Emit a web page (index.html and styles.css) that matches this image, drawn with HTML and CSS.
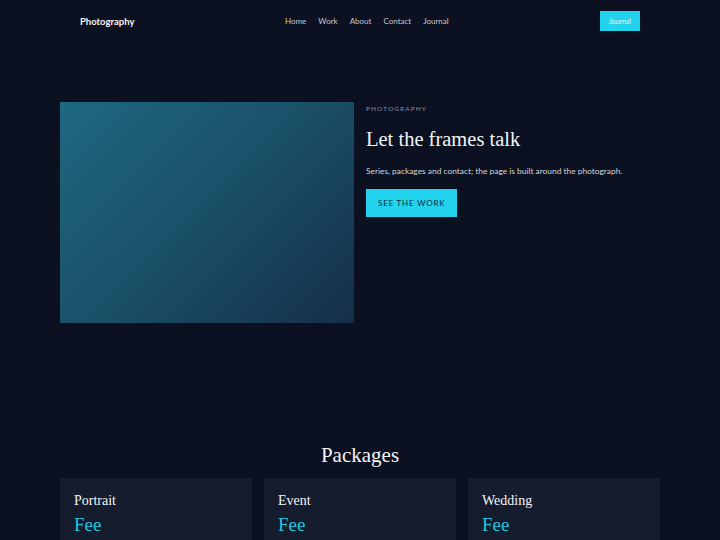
FILE: index.html
```html
<!DOCTYPE html>
<html>
<head>
    <title>Photography</title>
    <link rel="stylesheet" href="styles.css">
</head>
<body>
    <div class="container">
        <header class="site-header">
            <a class="logo" href="#">Photography</a>
            <nav class="nav">
                <a href="#">Home</a>
                <a href="#">Work</a>
                <a href="#">About</a>
                <a href="#">Contact</a>
                <a href="#">Journal</a>
            </nav>
            <a class="btn-small" href="#">Journal</a>
        </header>

        <section class="hero">
            <div class="hero-photo"></div>
            <div class="hero-text">
                <p class="eyebrow">PHOTOGRAPHY</p>
                <h1>Let the frames talk</h1>
                <p class="lead">Series, packages and contact; the page is built around the photograph.</p>
                <a class="btn" href="#">SEE THE WORK</a>
            </div>
        </section>

        <section class="packages">
            <h2>Packages</h2>
            <div class="cards">
                <div class="card">
                    <h3>Portrait</h3>
                    <p class="fee">Fee</p>
                </div>
                <div class="card">
                    <h3>Event</h3>
                    <p class="fee">Fee</p>
                </div>
                <div class="card">
                    <h3>Wedding</h3>
                    <p class="fee">Fee</p>
                </div>
            </div>
        </section>
    </div>
</body>
</html>
```

FILE: styles.css
```css
body {
    font-family: Lato, "Open Sans", sans-serif;
    background-color: #0b1120;
    color: #e5e7eb;
    margin: 0;
}
a {
    text-decoration: none;
    color: inherit;
}
.container {
    width: 600px;
    margin: 0 auto;
}
.site-header {
    display: flex;
    align-items: center;
    padding: 11px 20px;
}
.logo {
    font-weight: bold;
    font-size: 9.5px;
    color: #f3f4f6;
    width: 205px;
}
.nav {
    display: flex;
    gap: 12px;
    font-size: 8px;
    color: #c3c8d2;
}
.btn-small {
    background-color: #22d3ee;
    color: #e0f7fb;
    font-size: 7px;
    padding: 6px 9px;
    height: 8px;
    line-height: 8px;
    margin-left: auto;
}
.hero {
    display: grid;
    grid-template-columns: 1fr 1fr;
    gap: 12px;
    padding: 60px 0;
}
.hero-photo {
    aspect-ratio: 4 / 3;
    background: linear-gradient(135deg, #1d6980 0%, #1a4f68 50%, #162e48 100%);
}
.eyebrow {
    font-size: 6.5px;
    letter-spacing: 1.1px;
    color: #8b93a3;
    margin: 3px 0 16px;
}
h1 {
    font-family: "Liberation Serif", serif;
    font-weight: normal;
    font-size: 20.5px;
    color: #f3f4f6;
    margin: 0 0 15px;
}
.lead {
    font-size: 8.4px;
    color: #d1d5db;
    margin: 0 0 13px;
}
.btn {
    display: inline-block;
    background-color: #22d3ee;
    color: #0b2a36;
    font-size: 8px;
    letter-spacing: 0.8px;
    padding: 9px 12px;
}
.packages {
    padding-top: 60px;
}
h2 {
    font-family: "Liberation Serif", serif;
    font-weight: normal;
    font-size: 21px;
    color: #f3f4f6;
    text-align: center;
    margin: 0 0 10px;
}
.cards {
    display: grid;
    grid-template-columns: repeat(3, 1fr);
    gap: 12px;
}
.card {
    background-color: #141c2e;
    padding: 15px 14px 20px;
}
h3 {
    font-family: "Liberation Serif", serif;
    font-weight: normal;
    font-size: 14px;
    color: #f3f4f6;
    margin: 0 0 5px;
}
.fee {
    font-family: "Liberation Serif", serif;
    font-size: 19px;
    color: #22c5e0;
    margin: 0;
}
```
